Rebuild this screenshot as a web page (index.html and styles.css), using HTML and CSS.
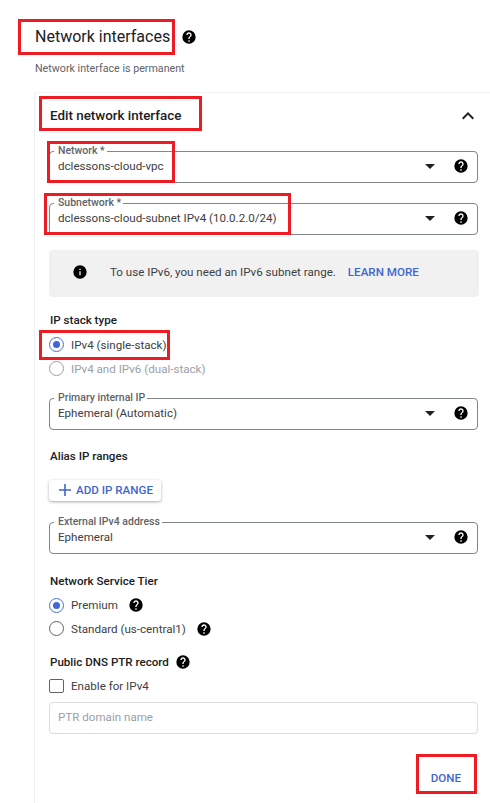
FILE: index.html
```html
<!DOCTYPE html>
<html lang="en">
<head>
<meta charset="utf-8">
<title>Network interfaces</title>
<link rel="stylesheet" href="styles.css">
</head>
<body>
<svg class="defs" width="0" height="0" aria-hidden="true">
  <symbol id="help" viewBox="0 0 24 24"><path d="M12 2a10 10 0 1 0 0 20 10 10 0 0 0 0-20zm1 17h-2v-2h2v2zm2.07-7.75-.9.92C13.45 12.9 13 13.5 13 15h-2v-.5c0-1.1.45-2.1 1.17-2.83l1.24-1.26c.37-.36.59-.86.59-1.41 0-1.1-.9-2-2-2s-2 .9-2 2H8c0-2.21 1.79-4 4-4s4 1.79 4 4c0 .88-.36 1.68-.93 2.25z"/></symbol>
  <symbol id="info" viewBox="0 0 24 24"><path d="M12 2a10 10 0 1 0 0 20 10 10 0 0 0 0-20zm1 15h-2v-6h2v6zm0-8h-2V7h2v2z"/></symbol>
</svg>
<main class="page">
  <header class="head">
    <div class="title-row">
      <h1 class="title">Network interfaces</h1>
      <svg class="help help-title"><use href="#help"/></svg>
    </div>
    <p class="sub">Network interface is permanent</p>
  </header>
  <section class="card">
    <div class="card-head">
      <h2 class="card-title">Edit network interface</h2>
      <svg class="chevron" viewBox="0 0 24 24"><path d="M12 8l-6 6 1.41 1.41L12 10.83l4.59 4.58L18 14z"/></svg>
    </div>
    <div class="field field-network">
      <span class="legend">Network *</span>
      <span class="value">dclessons-cloud-vpc</span>
      <span class="caret"></span>
      <svg class="help"><use href="#help"/></svg>
    </div>
    <div class="field field-subnet">
      <span class="legend">Subnetwork *</span>
      <span class="value">dclessons-cloud-subnet IPv4 (10.0.2.0/24)</span>
      <span class="caret"></span>
      <svg class="help"><use href="#help"/></svg>
    </div>
    <div class="notice">
      <svg class="info"><use href="#info"/></svg>
      <span class="notice-text">To use IPv6, you need an IPv6 subnet range.</span>
      <a class="link">LEARN MORE</a>
    </div>
    <h3 class="label label-stack">IP stack type</h3>
    <div class="radio radio-first"><span class="dot on"></span><span class="opt">IPv4 (single-stack)</span></div>
    <div class="radio"><span class="dot off"></span><span class="opt muted">IPv4 and IPv6 (dual-stack)</span></div>
    <div class="field field-primary">
      <span class="legend">Primary internal IP</span>
      <span class="value">Ephemeral (Automatic)</span>
      <span class="caret"></span>
      <svg class="help"><use href="#help"/></svg>
    </div>
    <h3 class="label label-alias">Alias IP ranges</h3>
    <button class="add" type="button">
      <svg class="plus" viewBox="0 0 12 12"><path d="M5.2 0h1.6v5.2H12v1.6H6.8V12H5.2V6.8H0V5.2h5.2z"/></svg>
      <span>ADD IP RANGE</span>
    </button>
    <div class="field field-external">
      <span class="legend">External IPv4 address</span>
      <span class="value">Ephemeral</span>
      <span class="caret"></span>
      <svg class="help"><use href="#help"/></svg>
    </div>
    <h3 class="label label-tier">Network Service Tier</h3>
    <div class="radio radio-tier"><span class="dot on"></span><span class="opt">Premium</span><svg class="help help-inline"><use href="#help"/></svg></div>
    <div class="radio"><span class="dot dark"></span><span class="opt">Standard (us-central1)</span><svg class="help help-inline"><use href="#help"/></svg></div>
    <div class="label-row">
      <h3 class="label">Public DNS PTR record</h3>
      <svg class="help"><use href="#help"/></svg>
    </div>
    <div class="check-row"><span class="box"></span><span class="opt">Enable for IPv4</span></div>
    <div class="input">PTR domain name</div>
    <div class="actions"><button class="done" type="button">DONE</button></div>
  </section>
</main>
<div class="mark m1"></div>
<div class="mark m2"></div>
<div class="mark m3"></div>
<div class="mark m4"></div>
<div class="mark m5"></div>
<div class="mark m6"></div>
</body>
</html>
```
FILE: styles.css
```css
* { box-sizing: border-box; }
html, body { margin: 0; padding: 0; }
body {
  position: relative;
  width: 490px;
  height: 803px;
  overflow: hidden;
  background: #fff;
  font-family: Roboto, "Liberation Sans", sans-serif;
  font-size: 11.6px;
  color: #3c4043;
}
.defs { position: absolute; }
.page { padding: 27px 0 0 34px; }
.head { height: 65px; padding-left: 1px; }
.title-row { display: flex; align-items: center; height: 20px; }
.title { margin: 0; font-size: 16px; font-weight: 400; color: #202124; line-height: 20px; }
.help { width: 16px; height: 16px; fill: #000; flex: none; }
.help-title { margin-left: 11px; }
.sub { margin: 15px 0 0; font-size: 10.7px; line-height: 14px; color: #5f6368; }
.card {
  width: 470px;
  height: 720px;
  padding: 0 0 0 14px;
  border-left: 1px solid #eceff1;
  border-top: 1px solid #f1f3f4;
  border-top-left-radius: 3px;
}
.card-head { display: flex; align-items: center; justify-content: space-between; width: 429px; height: 44px; padding: 2px 0 0 1px; }
.card-title { margin: 0; font-size: 13.4px; font-weight: 500; color: #202124; line-height: 20px; }
.chevron { width: 24px; height: 24px; fill: #202124; margin-right: -2px; }
.field {
  position: relative;
  display: flex;
  align-items: center;
  width: 429px;
  height: 32px;
  padding: 0 8px 2px 8px;
  border: 1px solid #80868b;
  border-radius: 4px;
}
.field-network { margin-top: 14px; }
.field-subnet { margin-top: 20px; }
.field-primary { margin-top: 18px; }
.field-external { margin-top: 21px; }
.legend {
  position: absolute;
  top: -7px;
  left: 4px;
  padding: 0 2px 0 4px;
  background: #fff;
  font-size: 10.5px;
  line-height: 12px;
  font-weight: 500;
  color: #5f6368;
}
.value { flex: 1; color: #3c4043; }
.caret {
  width: 0;
  height: 0;
  border-left: 5px solid transparent;
  border-right: 5px solid transparent;
  border-top: 5px solid #202124;
  margin-right: 18px;
}
.notice {
  display: flex;
  align-items: center;
  width: 430px;
  height: 47px;
  margin-top: 15px;
  padding: 0 0 3px 23px;
  background: #f1f1f1;
  border-radius: 4px;
}
.info { width: 16px; height: 16px; fill: #000; margin-right: 22px; flex: none; }
.notice-text { margin-right: 12px; }
.link { color: #3f66cc; font-weight: 500; }
.label { margin: 0; padding-left: 1px; font-size: 11.6px; font-weight: 500; line-height: 16px; color: #202124; }
.label-stack { margin-top: 15px; }
.label-alias { margin-top: 18px; }
.label-tier { margin-top: 19px; }
.radio { display: flex; align-items: center; height: 23.7px; }
.radio-first { margin-top: 5px; }
.radio-tier { margin-top: 4px; }
.dot { position: relative; flex: none; width: 15px; height: 15px; border-radius: 50%; border: 1px solid #5f6368; }
.dot.on { border-color: #4a6fd8; }
.dot.on::after { content: ""; position: absolute; inset: 3px; border-radius: 50%; background: #3f66d8; }
.dot.off { border-color: #9aa0a6; }
.opt { margin-left: 7px; color: #3c4043; }
.muted { color: #9aa0a6; }
.help-inline { margin-left: 10px; }
.add {
  display: flex;
  align-items: center;
  width: 112px;
  height: 21px;
  margin: 16px 0 0;
  padding: 0 0 1px 10px;
  border: 0;
  border-radius: 3px;
  background: #fff;
  box-shadow: 0 1px 3px rgba(60, 64, 67, .45);
  font: 500 11.6px Roboto, sans-serif;
  color: #3f66cc;
}
.plus { width: 12px; height: 12px; fill: #3f66cc; margin-right: 5px; }
.label-row { display: flex; align-items: center; gap: 6px; margin-top: 13px; height: 16px; }
.check-row { display: flex; align-items: center; height: 14px; margin-top: 9px; }
.box { flex: none; width: 15px; height: 14px; border: 1px solid #5f6368; border-radius: 2px; }
.input {
  display: flex;
  align-items: center;
  width: 429px;
  height: 32px;
  margin-top: 9px;
  padding: 0 0 2px 8px;
  border: 1px solid #dadce0;
  border-radius: 4px;
  color: #9aa0a6;
}
.actions { display: flex; justify-content: flex-end; width: 429px; margin-top: 36px; }
.done { margin: 0 17px 0 0; padding: 0; border: 0; background: none; font: 500 11.6px/16px Roboto, sans-serif; color: #3f66cc; }
.mark { position: absolute; border: 3px solid #ed1c24; pointer-events: none; }
.m1 { left: 18px; top: 19px; width: 157px; height: 36px; }
.m2 { left: 39px; top: 96px; width: 163px; height: 35px; }
.m3 { left: 47px; top: 141px; width: 128px; height: 42px; }
.m4 { left: 44px; top: 193px; width: 247px; height: 42px; }
.m5 { left: 39px; top: 330px; width: 131px; height: 30px; }
.m6 { left: 416px; top: 754px; width: 61px; height: 40px; }
```
